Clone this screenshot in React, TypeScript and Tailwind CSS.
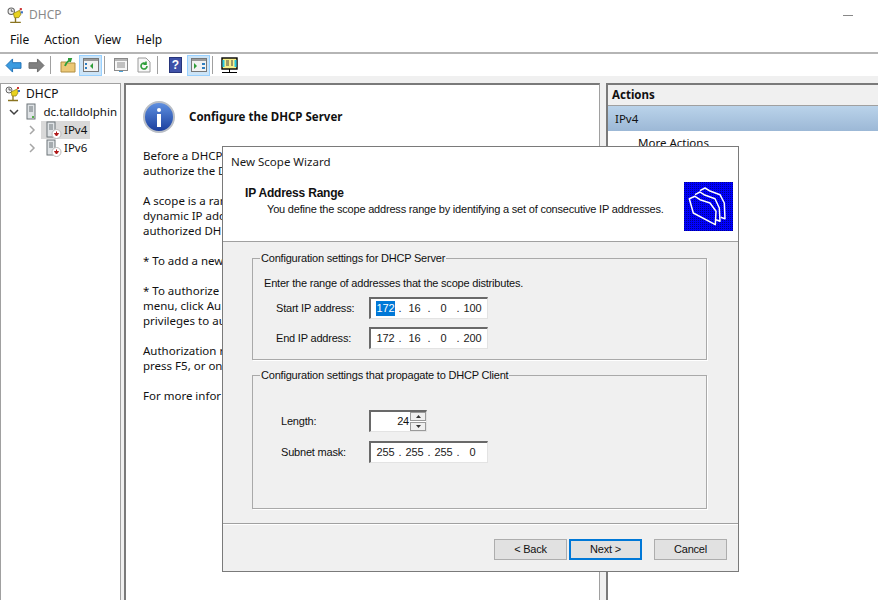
import type { ReactNode } from 'react'

const SEGOE = 'font-["Noto_Sans","Open_Sans",sans-serif]'
const DIALOG = 'font-["Liberation_Sans",Arial,sans-serif]'

function DhcpIcon({ size = 16 }: { size?: number }) {
  return (
    <svg width={size} height={size} viewBox="0 0 16 16">
      <circle cx="4" cy="4" r="3" fill="#f0f0f0" stroke="#666" strokeWidth="1" />
      <path d="M4 2v2h2" stroke="#444" fill="none" strokeWidth="0.8" />
      <path d="M6 6l6-3 1 4-2 3H7z" fill="#e8d21e" stroke="#8a7d16" strokeWidth="0.7" />
      <rect x="12" y="1" width="2" height="2" fill="#c33" />
      <rect x="13" y="4" width="2" height="2" fill="#3a6fc4" />
      <path d="M8 10v4M3 14.5h10" stroke="#8a7420" strokeWidth="1.3" />
    </svg>
  )
}

function ServerIcon({ badge }: { badge?: boolean }) {
  return (
    <svg width="16" height="18" viewBox="0 0 16 18">
      <rect x="1" y="1" width="8" height="15" fill="#dfe3e6" stroke="#6d7479" />
      <path d="M3 4h4M3 6h4M3 8h4" stroke="#6d7479" />
      {badge ? (
        <>
          <circle cx="10.5" cy="13" r="4.5" fill="#fff" stroke="#b9b9b9" />
          <path d="M10.5 10.5v3M8.5 12.5l2 2.5 2-2.5z" fill="#b01818" stroke="#b01818" />
        </>
      ) : (
        <rect x="6" y="13" width="2" height="2" fill="#58b04a" />
      )}
    </svg>
  )
}

function Chevron({ open }: { open?: boolean }) {
  return (
    <svg width="10" height="10" viewBox="0 0 10 10" fill="none" strokeWidth="1.5" stroke={open ? '#404040' : '#a6a6a6'}>
      <path d={open ? 'M1 3l4 4 4-4' : 'M3 1l4 4-4 4'} />
    </svg>
  )
}

function ToolBtn({ active, children }: { active?: boolean; children: ReactNode }) {
  return (
    <div className={`w-[23px] h-[21px] flex items-center justify-center border ${active ? 'bg-[#cce4f7] border-[#99d1ff]' : 'border-transparent'}`}>
      {children}
    </div>
  )
}

function Sep() {
  return <div className="w-px h-[18px] bg-[#a0a0a0] ml-[2px] mr-[3px]" />
}

function Toolbar() {
  return (
    <div className="h-[22px] flex items-center pl-[2px] bg-white">
      <ToolBtn>
        <svg width="17" height="15" viewBox="0 0 18 16">
          <path d="M1 8l7-7v4h9v6H8v4z" fill="#3a9be0" stroke="#1d6fb5" />
        </svg>
      </ToolBtn>
      <ToolBtn>
        <svg width="17" height="15" viewBox="0 0 18 16">
          <path d="M17 8l-7-7v4H1v6h9v4z" fill="#808080" stroke="#666" />
        </svg>
      </ToolBtn>
      <Sep />
      <div className="w-[2px]" />
      <ToolBtn>
        <svg width="16" height="16" viewBox="0 0 16 16">
          <path d="M1 5h5l1 1h8v9H1z" fill="#ecc877" stroke="#b18f43" />
          <path d="M5 9c1-3 3-5 5-6M8 2l3 0-1 3" fill="none" stroke="#2f9e3a" strokeWidth="1.8" />
        </svg>
      </ToolBtn>
      <ToolBtn active>
        <svg width="16" height="14" viewBox="0 0 16 14">
          <rect x="0.5" y="0.5" width="15" height="13" fill="#f2f2f2" stroke="#777" />
          <rect x="1" y="1" width="14" height="2" fill="#9a9a9a" />
          <path d="M2 5h2v2H2zM2 9h2v2H2z" fill="#2f7fc1" />
          <path d="M10 5v6L7 8z" fill="#2f9e3a" />
        </svg>
      </ToolBtn>
      <Sep />
      <div className="w-[1px]" />
      <ToolBtn>
        <svg width="16" height="16" viewBox="0 0 16 16">
          <rect x="1.5" y="1.5" width="13" height="12" fill="#f7f7f7" stroke="#8a8a8a" />
          <rect x="2" y="2" width="12" height="2" fill="#b5b5b5" />
          <path d="M4 6h8M4 8h8M4 10h8" stroke="#8a8a8a" />
          <rect x="6" y="14" width="4" height="1" fill="#4aa3d8" />
        </svg>
      </ToolBtn>
      <ToolBtn>
        <svg width="14" height="16" viewBox="0 0 14 16">
          <path d="M1 1h8l4 4v10H1z" fill="#f7f7f7" stroke="#9a9a9a" />
          <path d="M10 9a3 3 0 1 1-1-2.2M9 4.5v2.6h-2.6" fill="none" stroke="#2f9e3a" strokeWidth="1.6" />
        </svg>
      </ToolBtn>
      <Sep />
      <div className="w-[3px]" />
      <ToolBtn>
        <div className={`w-[13px] h-[16px] bg-[#3f51a8] border border-[#27357a] text-white text-[12px] leading-[14px] text-center font-bold ${DIALOG}`}>?</div>
      </ToolBtn>
      <ToolBtn active>
        <svg width="16" height="14" viewBox="0 0 16 14">
          <rect x="0.5" y="0.5" width="15" height="13" fill="#f2f2f2" stroke="#777" />
          <rect x="1" y="1" width="14" height="2" fill="#9a9a9a" />
          <path d="M3 5v6l3-3z" fill="#2f9e3a" />
          <path d="M11 5h3v2h-3zM11 9h3v2h-3z" fill="#2f7fc1" />
        </svg>
      </ToolBtn>
      <Sep />
      <div className="w-[2px]" />
      <ToolBtn>
        <svg width="17" height="17" viewBox="0 0 17 17">
          <rect x="1" y="1" width="15" height="11" fill="#f7f08a" stroke="#000" strokeWidth="1.4" />
          <path d="M2.5 3v7M14.5 3v7" stroke="#22c8e8" strokeWidth="2" />
          <path d="M5 4h3M5 6h3M5 8h3M10 4h2M10 6h2M10 8h2" stroke="#444" />
          <path d="M8.5 12v3M1 15.5h15" stroke="#000" />
        </svg>
      </ToolBtn>
    </div>
  )
}

function TreeRow({ indent, chevron, icon, label, selected }: { indent: number; chevron?: ReactNode; icon: ReactNode; label: string; selected?: boolean }) {
  return (
    <div className="flex items-center h-[18px]" style={{ paddingLeft: indent }}>
      <div className="w-[20px] flex items-center justify-start pl-[6px]">{chevron}</div>
      <div className={`flex items-center h-[18px] pl-[5px] pr-[3px] gap-[2px] ${selected ? 'bg-[#d9d9d9]' : ''}`}>
        {icon}
        <span>{label}</span>
      </div>
    </div>
  )
}

// only the part that shows beside the dialog
const middleLines = [
  ['Before a DHCP', 'authorize the D'],
  ['A scope is a ran', 'dynamic IP add', 'authorized DH'],
  ['* To add a new'],
  ['* To authorize t', 'menu, click Au', 'privileges to au'],
  ['Authorization r', 'press F5, or on'],
  ['For more infor'],
]

function IpField({ parts, selectFirst }: { parts: string[]; selectFirst?: boolean }) {
  return (
    <div className="w-[119px] h-[22px] bg-white border-t-2 border-l-2 border-t-[#696969] border-l-[#696969] border-r border-b border-r-[#e3e3e3] border-b-[#e3e3e3] flex items-center pl-[5px] leading-[15px] text-[#1a1a1a] mt-[-1px]">
      {parts.map((p, i) => (
        <div key={i} className="flex items-center">
          <span className={`w-[19px] text-center block ${selectFirst && i === 0 ? 'bg-[#0078d7] text-white' : ''}`}>{p}</span>
          {i < 3 && <span className="w-[10px] text-center block">.</span>}
        </div>
      ))}
    </div>
  )
}

function FolderStack() {
  return (
    <svg width="49" height="49" viewBox="0 0 49 49" className="shrink-0">
      <defs>
        <pattern id="dither" width="2" height="2" patternUnits="userSpaceOnUse">
          <rect width="2" height="2" fill="#0000ff" />
          <rect width="1" height="1" fill="#000090" />
        </pattern>
      </defs>
      <rect width="49" height="49" fill="url(#dither)" />
      <g fill="none" stroke="#ffffff" strokeWidth="1.5" strokeLinejoin="round">
        <path d="M16 8.7L21 6l4.3 2.7L36 12.7l4.3 8.3.7 15.7-4.3-1.4" />
        <path d="M11 12.7L16 10l4 2.7L31 16.7 35.3 26l.7 13.3-4-1.6" />
        <path d="M5.3 16.7L11 14.3l5 3.4 10 3.3 6 8.3-.7 13.4L9.3 31z" />
      </g>
    </svg>
  )
}

function WizardDialog() {
  return (
    <div className={`absolute left-[222px] top-[146px] w-[517px] h-[426px] bg-[#f0f0f0] border border-[#7a7a7a] flex flex-col text-[11px] tracking-[-0.2px] text-[#111] ${DIALOG}`}>
      <div className="bg-white h-[95px] shrink-0 relative border-b border-b-[#a0a0a0]">
        <div className={`absolute left-[8px] top-[7px] text-[11.5px] tracking-normal leading-[16px] text-[#1a1a1a] ${SEGOE}`}>New Scope Wizard</div>
        <div className="flex justify-between pl-[22px] pr-[5px] pt-[35px]">
          <div>
            <div className="font-bold text-[12px] leading-[15px] mt-[4px]">IP Address Range</div>
            <div className="pl-[22px] leading-[15px] mt-[1px] whitespace-nowrap">You define the scope address range by identifying a set of consecutive IP addresses.</div>
          </div>
          <FolderStack />
        </div>
      </div>

      <div className="flex-1 flex flex-col pl-[29px] pr-[31px] pt-[9px]">
        <fieldset className="h-[109px] border border-[#a9a9a9] pl-[11px] shadow-[1px_1px_0_#fff]">
          <legend className="ml-[-4px] px-[1px] leading-[14px]">Configuration settings for DHCP Server</legend>
          <div className="leading-[14px] mt-[11px]">Enter the range of addresses that the scope distributes.</div>
          <div className="mt-[8px] flex items-center pl-[12px]">
            <span className="w-[93px]">Start IP address:</span>
            <IpField parts={['172', '16', '0', '100']} selectFirst />
          </div>
          <div className="mt-[9px] flex items-center pl-[12px]">
            <span className="w-[93px]">End IP address:</span>
            <IpField parts={['172', '16', '0', '200']} />
          </div>
        </fieldset>

        <fieldset className="mt-[8px] h-[141px] border border-[#a9a9a9] pl-[28px] shadow-[1px_1px_0_#fff]">
          <legend className="ml-[-21px] px-[1px] leading-[14px]">Configuration settings that propagate to DHCP Client</legend>
          <div className="mt-[28px] flex items-center">
            <span className="w-[88px]">Length:</span>
            <div className="w-[58px] h-[22px] bg-white border-t-2 border-l-2 border-t-[#696969] border-l-[#696969] border-r border-b border-r-[#e3e3e3] border-b-[#e3e3e3] flex items-center justify-end">
              <span className="mr-[1px]">24</span>
              <div className="w-[16px] h-[20px] flex flex-col">
                <div className="h-[9px] bg-[#efefef] border border-[#9a9a9a] flex items-center justify-center">
                  <svg width="5" height="3" viewBox="0 0 5 3"><path d="M2.5 0L5 3H0z" fill="#333" /></svg>
                </div>
                <div className="h-[9px] mt-[1px] bg-[#efefef] border border-[#9a9a9a] flex items-center justify-center">
                  <svg width="5" height="3" viewBox="0 0 5 3"><path d="M2.5 3L5 0H0z" fill="#333" /></svg>
                </div>
              </div>
            </div>
          </div>
          <div className="mt-[10px] flex items-center">
            <span className="w-[88px]">Subnet mask:</span>
            <IpField parts={['255', '255', '255', '0']} />
          </div>
        </fieldset>
      </div>

      <div className="h-[48px] border-t border-t-[#a0a0a0] shadow-[inset_0_1px_0_#fff] shrink-0 flex justify-end items-start pt-[15px] pr-[11px]">
        <button className="w-[73px] h-[21px] bg-[#e1e1e1] border border-[#adadad] leading-none">&lt; Back</button>
        <button className="w-[73px] h-[21px] ml-[2px] bg-[#e1e1e1] border-2 border-[#0078d7] leading-none">Next &gt;</button>
        <button className="w-[73px] h-[21px] ml-[12px] bg-[#e1e1e1] border border-[#adadad] leading-none">Cancel</button>
      </div>
    </div>
  )
}

export default function App() {
  return (
    <div className={`relative w-[878px] h-[600px] overflow-hidden bg-white text-[11.5px] text-[#111] ${SEGOE}`}>
      {/* title bar */}
      <div className="h-[30px] flex items-center pl-[7px] gap-[5px]">
        <DhcpIcon size={17} />
        <span className="text-[12px] text-[#8a8a8a]">DHCP</span>
        <div className="ml-auto mr-[25px] w-[10px] h-px bg-[#888]" />
      </div>

      {/* menu */}
      <div className="h-[24px] flex items-center pl-[10px] gap-[15px] text-[12px] pb-[2px] border-b-2 border-b-[#b5b5b5]">
        <span>File</span>
        <span>Action</span>
        <span>View</span>
        <span>Help</span>
      </div>

      <Toolbar />

      {/* panes */}
      <div className="h-[7px] bg-[#f0f0f0]" />
      <div className="flex h-[517px] bg-[#f0f0f0]">
        <div className="w-[121px] bg-white border border-[#a0a0a0] border-b-0 shrink-0 overflow-hidden whitespace-nowrap">
          <div className="flex items-center h-[19px] pl-[4px] gap-[5px] text-[12px]">
            <DhcpIcon />
            <span>DHCP</span>
          </div>
          <TreeRow indent={2} chevron={<Chevron open />} icon={<ServerIcon />} label="dc.talldolphin" />
          <TreeRow indent={20} chevron={<Chevron />} icon={<ServerIcon badge />} label="IPv4" selected />
          <TreeRow indent={20} chevron={<Chevron />} icon={<ServerIcon badge />} label="IPv6" />
        </div>

        <div className="w-[476px] ml-[3px] bg-white border-t-2 border-l-2 border-t-[#7a7a7a] border-l-[#7a7a7a] border-r border-r-[#a0a0a0] shrink-0 pl-[17px] pt-[16px] overflow-hidden">
          <div className="flex items-center gap-[14px] h-[32px]">
            <div className="w-[32px] h-[32px] rounded-full bg-gradient-to-b from-[#5f8fe0] to-[#1c3f9e] border-2 border-[#b9bec6] flex items-center justify-center">
              <div className="flex flex-col items-center">
                <div className="w-[4px] h-[4px] rounded-full bg-white" />
                <div className="w-[4px] h-[13px] bg-white mt-[2px]" />
              </div>
            </div>
            <span className="font-bold text-[11.5px]">Configure the DHCP Server</span>
          </div>
          <div className="mt-[15px] leading-[15px] whitespace-nowrap">
            {middleLines.map((p, i) => (
              <div key={i} className="mb-[15px]">
                {p.map(l => (
                  <div key={l}>{l}</div>
                ))}
              </div>
            ))}
          </div>
        </div>

        <div className="flex-1 ml-[6px] bg-white border-t-2 border-l-2 border-t-[#7a7a7a] border-l-[#7a7a7a]">
          <div className="h-[21px] bg-[#f0f0f0] border-b border-b-[#a0a0a0] flex items-center pl-[4px] font-bold">Actions</div>
          <div className="h-[25px] bg-gradient-to-b from-[#bad3ea] to-[#9cb8d6] flex items-center pl-[7px]">IPv4</div>
          <div className="pl-[30px] pt-[4px] leading-[16px]">More Actions</div>
        </div>
      </div>

      <WizardDialog />
    </div>
  )
}
